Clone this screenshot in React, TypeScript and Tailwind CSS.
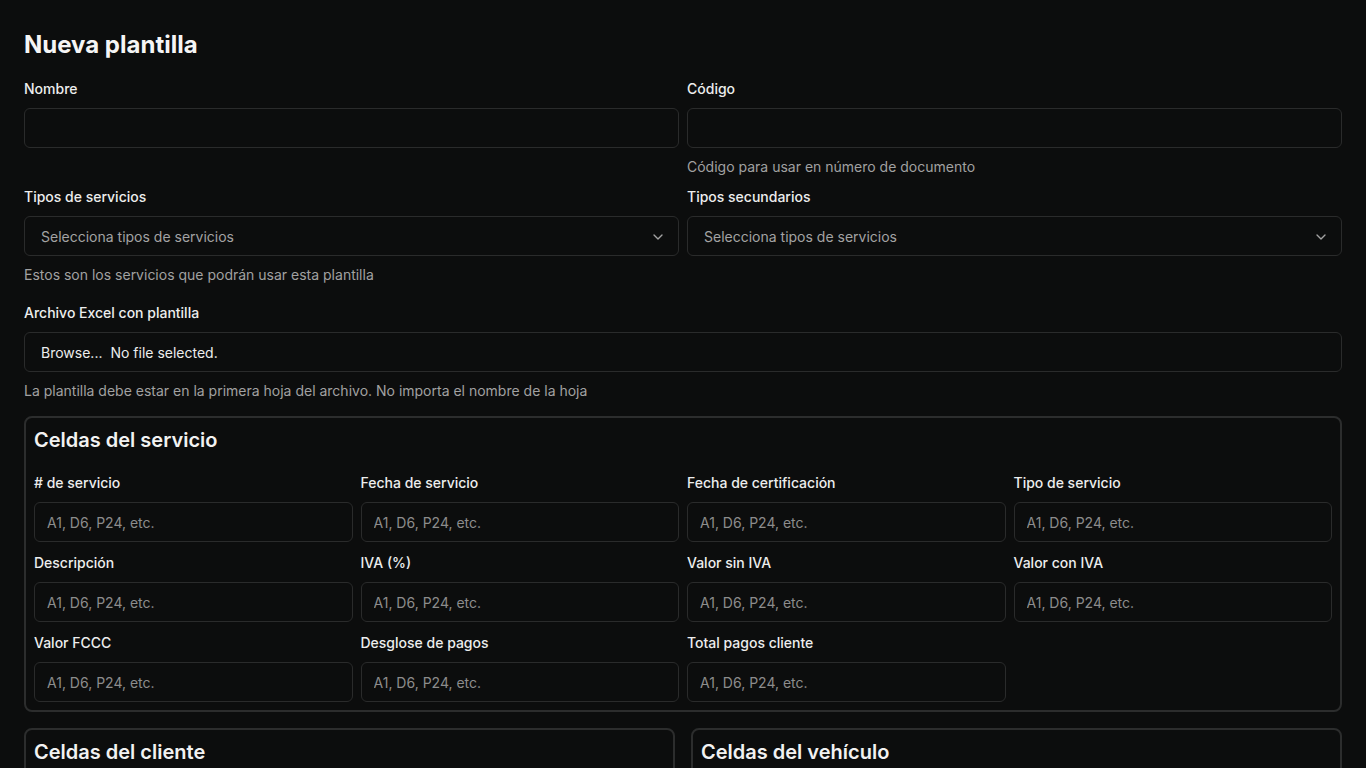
import { ChevronDown } from 'lucide-react';

const PLACEHOLDER = 'A1, D6, P24, etc.';

const serviceCells = [
  '# de servicio',
  'Fecha de servicio',
  'Fecha de certificación',
  'Tipo de servicio',
  'Descripción',
  'IVA (%)',
  'Valor sin IVA',
  'Valor con IVA',
  'Valor FCCC',
  'Desglose de pagos',
  'Total pagos cliente',
];

function Label({ children }: { children: React.ReactNode }) {
  return <label className="block text-sm font-medium leading-5 text-[#ededed] mb-[9px]">{children}</label>;
}

function Helper({ children }: { children: React.ReactNode }) {
  return <p className="mt-[9px] text-sm leading-5 text-[#a1a1a1]">{children}</p>;
}

function TextInput({ placeholder = '' }: { placeholder?: string }) {
  return (
    <input
      type="text"
      placeholder={placeholder}
      className="block w-full h-10 rounded-md border border-[#2a2b2b] bg-[#0c0d0d] px-3 text-sm text-[#ededed] placeholder:text-[#8c8c8c] outline-none"
    />
  );
}

function SelectBox() {
  return (
    <button
      type="button"
      className="flex w-full h-10 items-center justify-between rounded-md border border-[#2a2b2b] bg-[#0c0d0d] pl-4 pr-3 pt-px text-sm text-[#a3a3a3]"
    >
      <span>Selecciona tipos de servicios</span>
      <ChevronDown className="w-4 h-4 text-[#a3a3a3]" strokeWidth={2} />
    </button>
  );
}

function CellField({ label }: { label: string }) {
  return (
    <div>
      <Label>{label}</Label>
      <TextInput placeholder={PLACEHOLDER} />
    </div>
  );
}

function Section({ title, children }: { title: string; children?: React.ReactNode }) {
  return (
    <fieldset className="rounded-lg border-2 border-[#2c2d2d] px-2 pt-2 pb-2">
      <h2 className="text-xl leading-7 font-semibold text-[#f2f2f2] mb-[19px]">{title}</h2>
      {children}
    </fieldset>
  );
}

export default function App() {
  return (
    <div
      className="min-h-screen bg-[#0c0d0d] px-6 pt-[29px] pb-10 text-[#ededed]"
      style={{ fontFamily: 'Inter, "Noto Sans", sans-serif' }}
    >
      <h1 className="text-2xl leading-8 font-bold text-[#f5f5f5] mb-[18px]">Nueva plantilla</h1>

      {/* Nombre / Código */}
      <div className="grid grid-cols-2 gap-x-2">
        <div>
          <Label>Nombre</Label>
          <TextInput />
        </div>
        <div>
          <Label>Código</Label>
          <TextInput />
          <Helper>Código para usar en número de documento</Helper>
        </div>
      </div>

      {/* Tipos */}
      <div className="grid grid-cols-2 gap-x-2 mt-[10px]">
        <div>
          <Label>Tipos de servicios</Label>
          <SelectBox />
          <Helper>Estos son los servicios que podrán usar esta plantilla</Helper>
        </div>
        <div>
          <Label>Tipos secundarios</Label>
          <SelectBox />
        </div>
      </div>

      {/* Archivo */}
      <div className="mt-[18px]">
        <Label>Archivo Excel con plantilla</Label>
        <div className="flex h-10 items-center rounded-md border border-[#2a2b2b] bg-[#0c0d0d] px-4 pt-px text-sm text-[#ededed]">
          <span>Browse...</span>
          <span className="ml-2">No file selected.</span>
        </div>
        <Helper>La plantilla debe estar en la primera hoja del archivo. No importa el nombre de la hoja</Helper>
      </div>

      {/* Celdas del servicio */}
      <div className="mt-[15px]">
        <Section title="Celdas del servicio">
          <div className="grid grid-cols-4 gap-x-2 gap-y-[11px]">
            {serviceCells.map((c) => (
              <CellField key={c} label={c} />
            ))}
          </div>
        </Section>
      </div>

      <div className="grid grid-cols-2 gap-4 mt-4">
        <Section title="Celdas del cliente">
          <div className="grid grid-cols-2 gap-x-2 gap-y-[11px]">
            <CellField label="Nombre" />
            <CellField label="Documento" />
          </div>
        </Section>
        <Section title="Celdas del vehículo">
          <div className="grid grid-cols-2 gap-x-2 gap-y-[11px]">
            <CellField label="Placa" />
            <CellField label="Marca" />
          </div>
        </Section>
      </div>
    </div>
  );
}
